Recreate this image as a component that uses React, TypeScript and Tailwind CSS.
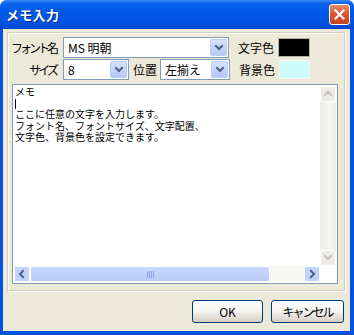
import React from "react";

const font = "font-['Noto_Sans_CJK_JP',sans-serif]";

function Chevron({ dir, color }: { dir: "up" | "down" | "left" | "right"; color: string }) {
  const pts: Record<string, string> = {
    down: "2,3 5,6 8,3",
    up: "2,6 5,3 8,6",
    left: "6,2 3,5 6,8",
    right: "4,2 7,5 4,8",
  };
  return (
    <svg width="10" height="10" viewBox="0 0 10 10">
      <polyline points={pts[dir]} fill="none" stroke={color} strokeWidth="2" strokeLinecap="square" />
    </svg>
  );
}

function DropButton() {
  return (
    <div className="w-[17px] h-[17px] rounded-[2px] border border-[#B9CDF8] bg-linear-to-b from-[#D6E2FD] to-[#B4C8F8] flex items-center justify-center">
      <Chevron dir="down" color="#4D6185" />
    </div>
  );
}

function Combo({ w, text }: { w: string; text: string }) {
  return (
    <div className={`${w} h-[21px] border border-[#7F9DB9] bg-white flex items-center p-px`}>
      <span className="flex-1 pl-[3px] text-[12px] leading-none text-black">{text}</span>
      <DropButton />
    </div>
  );
}

function XpButton({ label, w, tight }: { label: string; w: string; tight?: boolean }) {
  return (
    <div
      className={`${w} h-[23px] rounded-[3px] border border-[#003C74] bg-linear-to-b from-[#FFFFFF] via-[#F3F3EF] to-[#D6D0C5] flex items-center justify-center text-[12px] text-black shadow-[inset_0_-2px_0_#D6D0C5] ${tight ? "tracking-[-2px]" : ""}`}
    >
      {label}
    </div>
  );
}

export default function App() {
  return (
    <div className={`w-[354px] h-[335px] flex flex-col rounded-t-[7px] overflow-hidden bg-[#0552E0] ${font}`}>
      {/* title bar */}
      <div className="h-[29px] flex items-center pl-[6px] pr-[4px] bg-[linear-gradient(to_bottom,#3A8CF7_0%,#0A62EE_12%,#0058E8_45%,#0054E3_80%,#0046D0_100%)]">
        <span className="text-white font-bold text-[13px] tracking-[0.3px] [text-shadow:1px_1px_0_#0A2A8C]">メモ入力</span>
        <div className="ml-auto w-[21px] h-[21px] rounded-[3px] border border-white bg-linear-to-b from-[#E88C6E] via-[#D8532F] to-[#C2421F] flex items-center justify-center">
          <svg width="11" height="11" viewBox="0 0 11 11">
            <path d="M1.5 1.5 L9.5 9.5 M9.5 1.5 L1.5 9.5" stroke="white" strokeWidth="2.2" strokeLinecap="square" />
          </svg>
        </div>
      </div>

      {/* body */}
      <div className="flex-1 ml-[3px] mr-[4px] mb-[4px] bg-[#ECE9D8] flex flex-col pt-[3px] pl-[4px] pr-[6px] text-black">
        {/* group panel */}
        <div className="w-[338px] h-[259px] border border-[#D0D0BF] shadow-[inset_1px_1px_0_#FFFFFF,1px_1px_0_#FFFFFF] pt-[4px] flex flex-col">
          <div className="flex items-center h-[21px]">
            <span className="w-[51px] text-right text-[12px] tracking-[-3px] pr-[3px]">フォント名</span>
            <div className="ml-[4px]">
              <Combo w="w-[166px]" text="MS 明朝" />
            </div>
            <span className="ml-[9px] w-[36px] text-[12px]">文字色</span>
            <div className="ml-[4px] w-[32px] h-[19px] bg-black border border-[#B5B2A6]" />
          </div>
          <div className="flex items-center h-[21px] mt-px">
            <span className="w-[51px] text-right text-[12px] tracking-[-3px] pr-[3px]">サイズ</span>
            <div className="ml-[4px]">
              <Combo w="w-[66px]" text="8" />
            </div>
            <span className="ml-[4px] w-[24px] text-[12px]">位置</span>
            <div className="ml-[3px]">
              <Combo w="w-[70px]" text="左揃え" />
            </div>
            <span className="ml-[9px] w-[36px] text-[12px]">背景色</span>
            <div className="ml-[4px] w-[31px] h-[19px] bg-[#CCFCFC] border border-[#F4F4EE]" />
          </div>

          {/* memo area */}
          <div className="ml-[4px] mt-[4px] w-[326px] h-[200px] border border-[#7F9DB9] bg-white p-px flex flex-col">
            <div className="flex flex-1 min-h-0">
              <div className="flex-1 pl-px pt-px font-['Liberation_Sans','Noto_Sans_CJK_JP',sans-serif] text-[10px] leading-[11.2px] text-black whitespace-nowrap">
                メモ
                <br />
                <span className="inline-block align-top w-px h-[10px] mt-px bg-black" />
                <br />
                ここに任意の文字を入力します。
                <br />
                フォント名、フォントサイズ、文字配置、
                <br />
                文字色、背景色を設定できます。
              </div>
              {/* vertical scrollbar (disabled) */}
              <div className="w-[16px] flex flex-col bg-[#F5F4EF]">
                <div className="h-[16px] rounded-[2px] border border-white bg-[#EEEDE5] flex items-center justify-center">
                  <Chevron dir="up" color="#C4C2B6" />
                </div>
                <div className="flex-1 bg-[linear-gradient(to_right,#EEEDE5_0%,#F7F7F3_60%,#EEEDE5_100%)]" />
                <div className="h-[16px] rounded-[2px] border border-white bg-[#EEEDE5] flex items-center justify-center">
                  <Chevron dir="down" color="#C4C2B6" />
                </div>
              </div>
            </div>
            {/* horizontal scrollbar */}
            <div className="h-[16px] flex">
              <div className="flex-1 flex bg-[#F7F7F3]">
                <div className="w-[16px] h-[16px] rounded-[2px] border border-white bg-[#C1D3FB] flex items-center justify-center">
                  <Chevron dir="left" color="#4D6185" />
                </div>
                <div className="w-[240px] h-[16px] rounded-[2px] border border-white bg-linear-to-b from-[#C9D8FC] to-[#B8CCF8] flex items-center justify-center gap-px">
                  <span className="w-px h-[7px] bg-[#8BA5E6]" />
                  <span className="w-px h-[7px] bg-[#8BA5E6]" />
                  <span className="w-px h-[7px] bg-[#8BA5E6]" />
                  <span className="w-px h-[7px] bg-[#8BA5E6]" />
                </div>
                <div className="flex-1" />
                <div className="w-[16px] h-[16px] rounded-[2px] border border-white bg-[#C1D3FB] flex items-center justify-center">
                  <Chevron dir="right" color="#4D6185" />
                </div>
              </div>
              <div className="w-[16px] bg-white" />
            </div>
          </div>
        </div>

        {/* buttons */}
        <div className="mt-[9px] flex justify-end gap-[8px]">
          <XpButton label="OK" w="w-[71px]" />
          <XpButton label="キャンセル" w="w-[73px]" tight />
        </div>
      </div>
    </div>
  );
}
